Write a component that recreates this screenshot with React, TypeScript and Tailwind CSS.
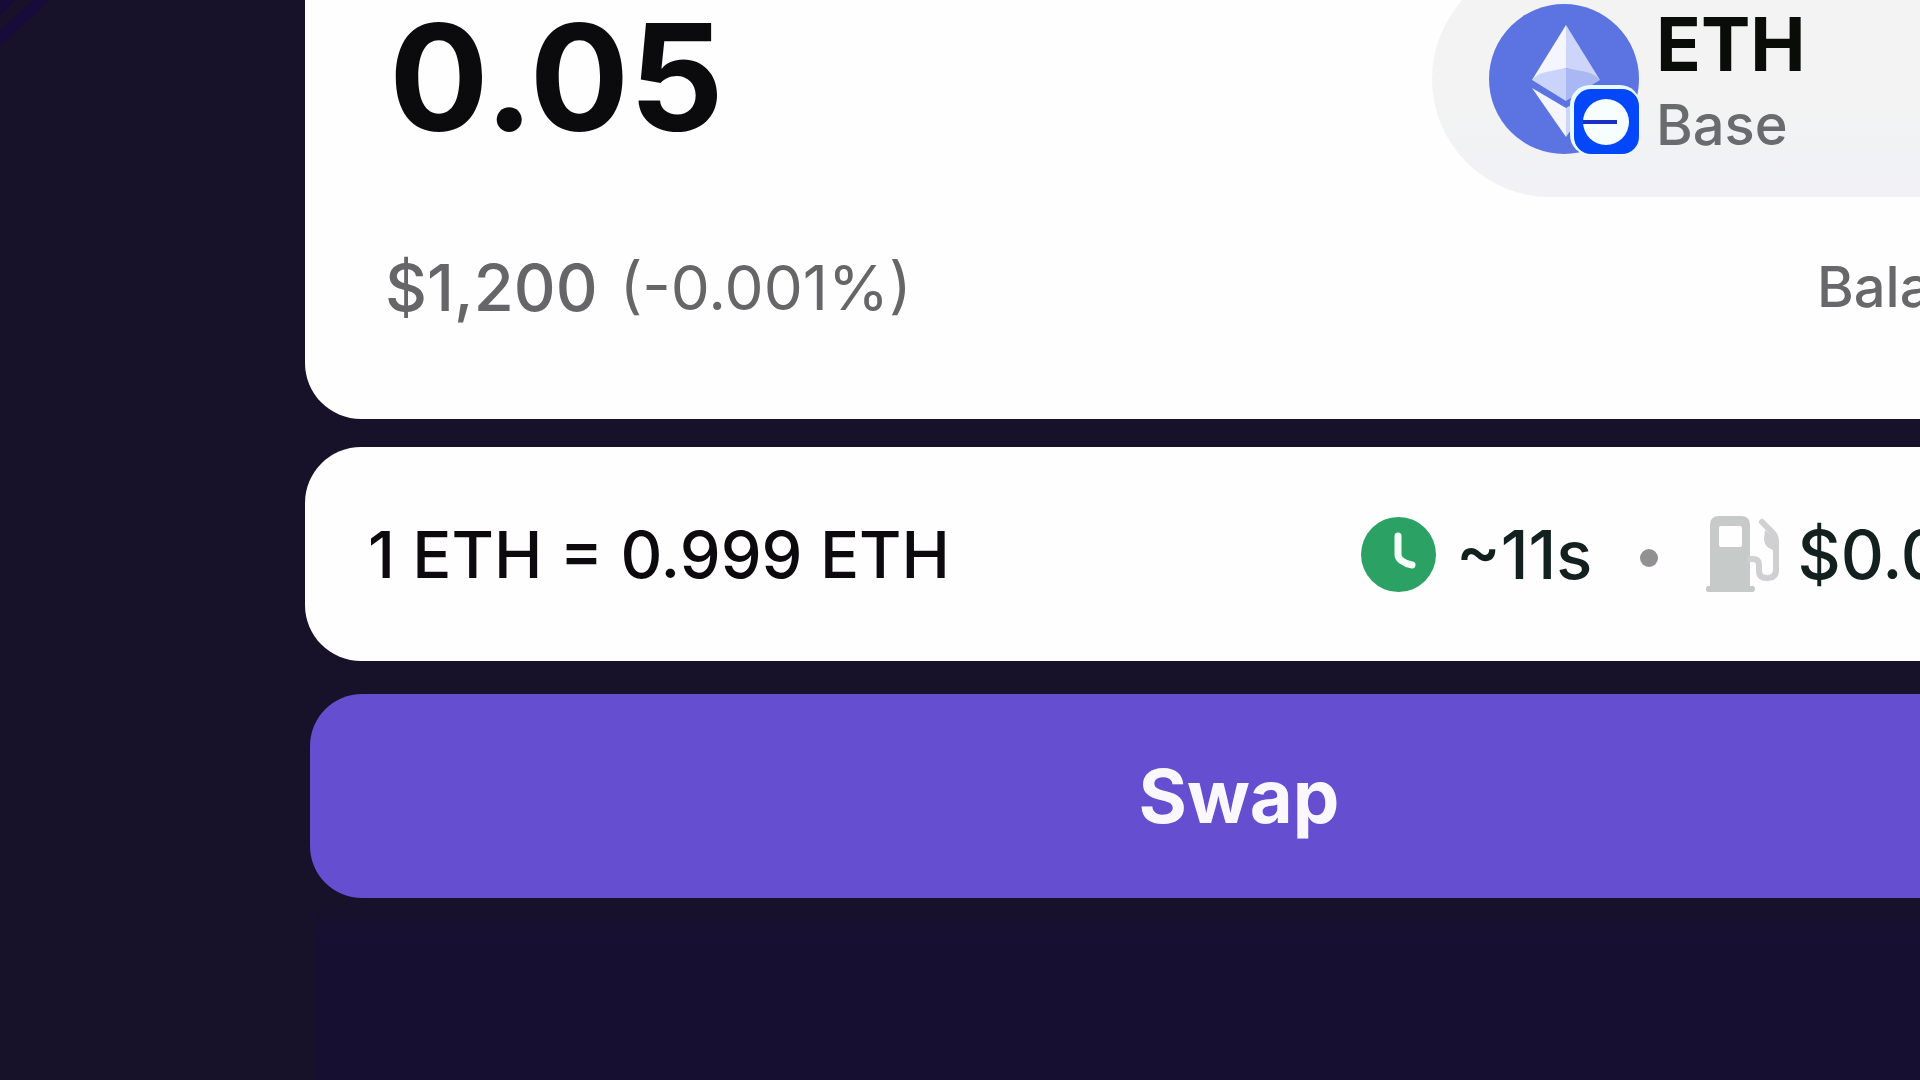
import { useState } from "react";

function EthereumIcon() {
  return (
    <svg viewBox="0 0 150 150" className="size-[150px]" aria-hidden="true">
      <circle cx="75" cy="75" r="75" fill="#5b74e2" />
      <path d="M77 21 L43 76 L77 64 Z" fill="#f4f5ff" />
      <path d="M77 21 L111 76 L77 64 Z" fill="#cdd5fa" />
      <path d="M77 64 L57 68 Q48 70 43 76 L77 97 Z" fill="#c9d3fb" />
      <path d="M77 64 L97 68 Q106 70 111 76 L77 97 Z" fill="#a9b8f4" />
      <path d="M43 84 L77 104 V133 Z" fill="#f4f5ff" />
      <path d="M111 84 L77 104 V133 Z" fill="#cdd5fa" />
    </svg>
  );
}

function BaseBadge() {
  return (
    <svg viewBox="0 0 70 70" className="absolute -right-px -bottom-px size-[70px]" aria-hidden="true">
      <rect x="0" y="0" width="70" height="70" rx="20" fill="#e9fbff" />
      <rect x="4" y="4" width="65" height="65" rx="17" fill="#0447fa" />
      <circle cx="36" cy="37" r="23" fill="#f6feff" />
      <rect x="13" y="35" width="34" height="4" fill="#1a2fc4" />
    </svg>
  );
}

function ClockIcon() {
  return (
    <svg viewBox="0 0 75 75" className="size-[75px] shrink-0" aria-hidden="true">
      <circle cx="37.5" cy="37.5" r="37.5" fill="#2ba263" />
      <path d="M37 19 V38 Q37 41 41 44 Q45 47 51 48" fill="none" stroke="#f3fff8" strokeWidth="7" strokeLinecap="round" strokeLinejoin="round" />
    </svg>
  );
}

function FuelIcon() {
  return (
    <svg viewBox="0 0 74 76" className="h-[76px] w-[74px] shrink-0" aria-hidden="true">
      <path
        fillRule="evenodd"
        fill="#c6cac9"
        d="M4 70 V9 Q4 0 13 0 H35 Q44 0 44 9 V70 H47 Q49 70 49 73 Q49 76 46 76 H2 Q0 76 0 73 Q0 70 2 70 Z M15 10 Q13 10 13 12 V29 Q13 31 15 31 H34 Q36 31 36 29 V12 Q36 10 34 10 Z"
      />
      <path
        d="M44 43 H47 Q53 43 53 49 V55 Q53 62 61 62 Q70 62 70 54 V25 Q70 20 66 16 L56 6"
        fill="none"
        stroke="#d0cfd2"
        strokeWidth="6"
        strokeLinecap="round"
        strokeLinejoin="round"
      />
      <path d="M59 14 L67 20 V34 Q58 31 58 23 Z" fill="#d0cfd2" />
    </svg>
  );
}

export default function App() {
  const [amount, setAmount] = useState("0.05");

  return (
    <main className="relative flex min-h-screen flex-col overflow-hidden bg-[#171129] font-['Inter',sans-serif]">
      <svg viewBox="0 0 60 60" className="absolute top-0 left-0 size-[60px]" aria-hidden="true">
        <path d="M-4 42 Q16 24 44 -3" fill="none" stroke="#170b3c" strokeWidth="11" />
        <path d="M-3 12 L12 -3" fill="none" stroke="#170b3a" strokeWidth="9" />
      </svg>

      <div className="mr-[-253px] ml-[305px] flex grow flex-col">
        <section className="rounded-b-[56px] bg-[#fefefe] px-20 pb-[93px]">
          <div className="flex items-start justify-between">
            <input
              aria-label="Amount"
              value={amount}
              onChange={(e) => setAmount(e.target.value)}
              className="h-[155px] w-0 grow bg-transparent pl-1 text-[148px] leading-[155px] font-bold text-[#0b0b0d] outline-none"
            />
            <button
              type="button"
              className="-mt-[39px] flex h-[236px] w-[661px] shrink-0 items-center gap-[17px] rounded-full bg-linear-to-b from-[#f2f3f2] from-60% to-[#f1f1f7] pl-[57px] text-left"
            >
              <span className="relative shrink-0">
                <EthereumIcon />
                <BaseBadge />
              </span>
              <span className="flex flex-col gap-1">
                <span className="text-[74px] leading-[88px] font-bold text-[#0a0c08]">ETH</span>
                <span className="text-[56px] leading-[66px] font-medium text-[#6a6b6e]">Base</span>
              </span>
            </button>
          </div>

          <div className="mt-[52px] flex items-center justify-between text-[#666668]">
            <p className="flex items-center gap-[22px] text-[65px] leading-[77px]">
              <span className="font-medium">$1,200</span>
              <span className="text-[62px]">(-0.001%)</span>
            </p>
            <p className="w-[276px] text-[56px] leading-[77px] font-medium whitespace-nowrap text-[#68686a]">Balance</p>
          </div>
        </section>

        <section className="mt-7 flex h-[214px] items-center justify-between rounded-[56px] bg-[#fefefe] pr-20 pl-[63px]">
          <p className="text-[65px] leading-[77px] font-medium text-[#0c0a0e]">1 ETH = 0.999 ETH</p>
          <div className="flex w-[732px] items-center text-[67px] leading-[77px] font-medium text-[#12211f]">
            <ClockIcon />
            <span className="ml-5 [font-kerning:none]">~11s</span>
            <span className="mx-12 mt-2 size-[18px] rounded-full bg-[#929093]" />
            <FuelIcon />
            <span className="ml-[17px]">$0.0</span>
          </div>
        </section>

        <button
          type="button"
          className="mx-[5px] mt-[33px] h-[204px] rounded-[52px] bg-[#654ecf] text-[74px] font-bold text-[#fbf7ff]"
        >
          Swap
        </button>
        <div className="ml-[10px] grow bg-linear-to-b from-[#171129] to-[#170f32] to-25%" />
      </div>
    </main>
  );
}
